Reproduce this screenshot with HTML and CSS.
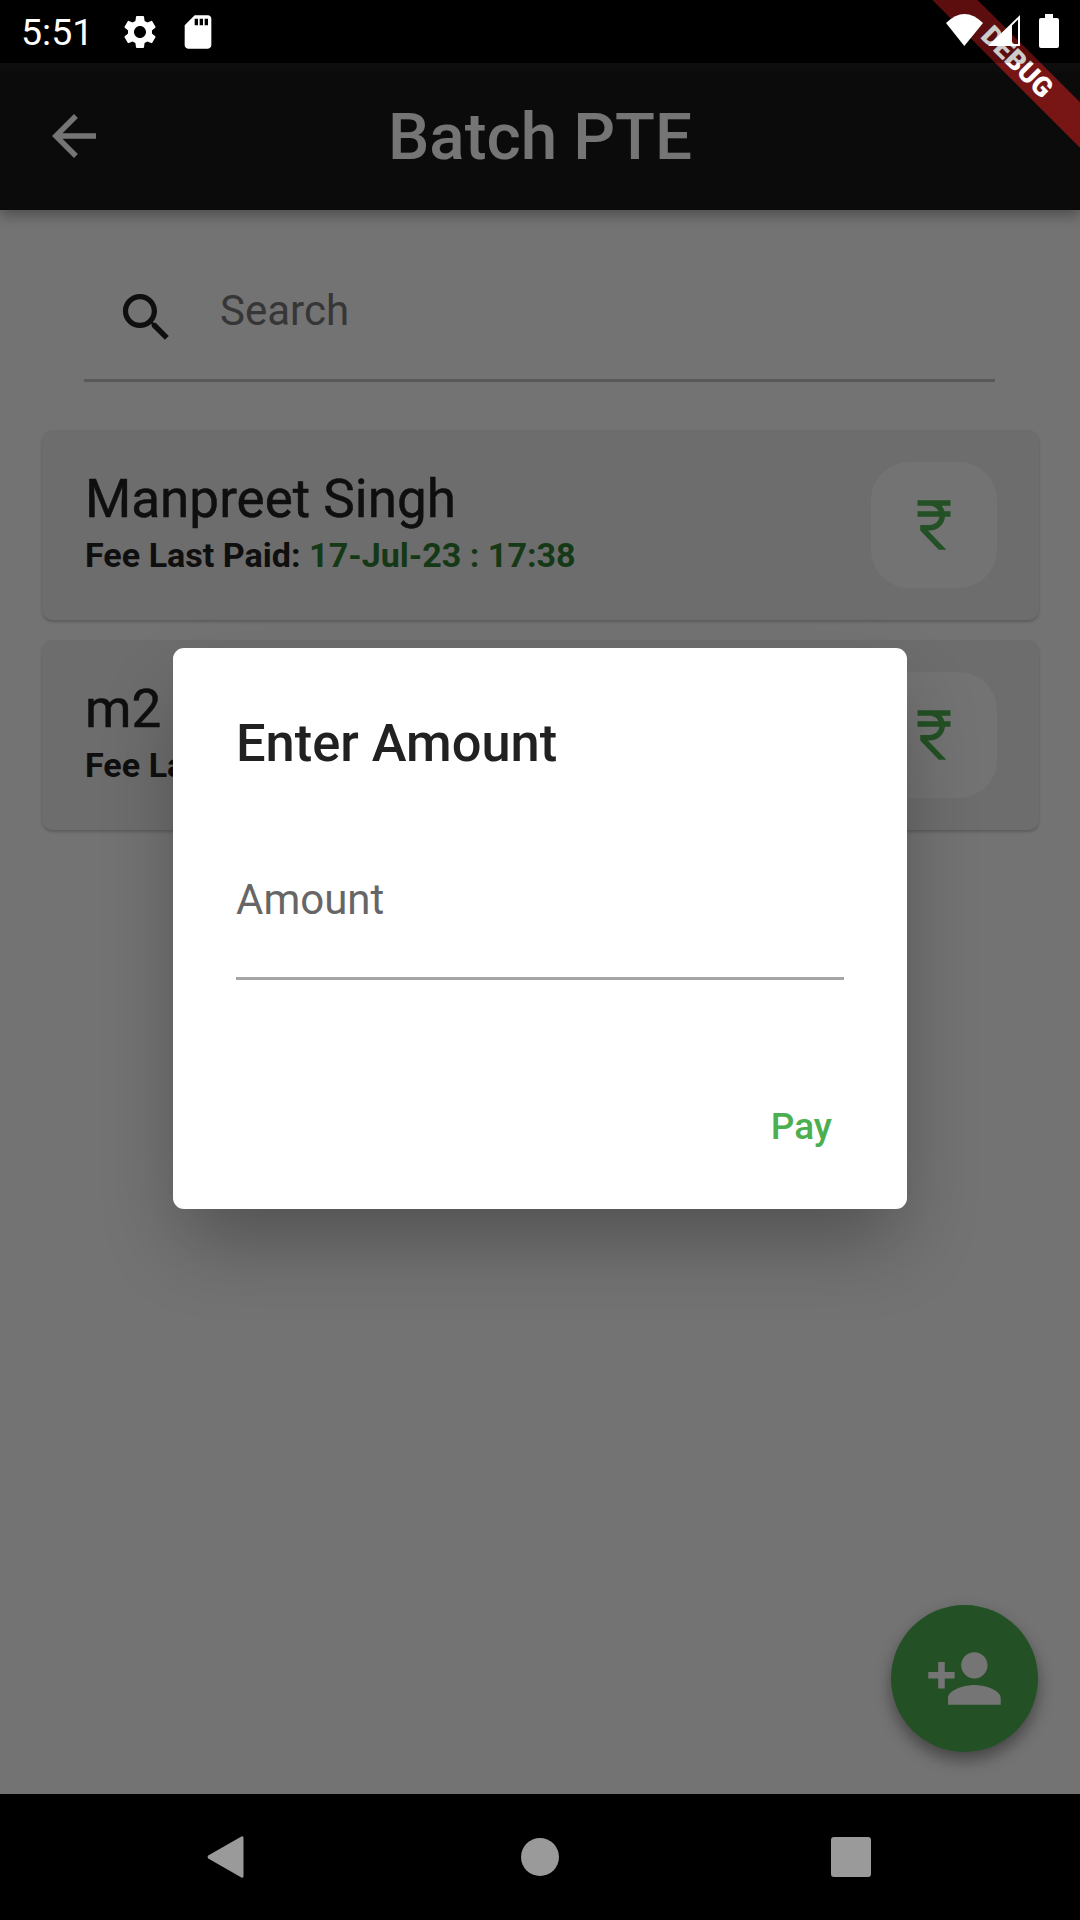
FILE: index.html
```html
<!DOCTYPE html>
<html lang="en">
<head>
<meta charset="utf-8">
<title>Batch PTE</title>
<link rel="stylesheet" href="styles.css">
</head>
<body>
<div class="screen">
  <div class="statusbar">
    <div class="status-left">
      <span class="clock">5:51</span>
      <svg class="ic-gear" viewBox="0 0 24 24"><path d="M19.14 12.94c.04-.3.06-.61.06-.94 0-.32-.02-.64-.07-.94l2.03-1.58c.18-.14.23-.41.12-.61l-1.92-3.32c-.12-.22-.37-.29-.59-.22l-2.39.96c-.5-.38-1.03-.7-1.62-.94l-.36-2.54c-.04-.24-.24-.41-.48-.41h-3.84c-.24 0-.43.17-.47.41l-.36 2.54c-.59.24-1.13.57-1.62.94l-2.39-.96c-.22-.08-.47 0-.59.22L2.74 8.87c-.12.21-.08.47.12.61l2.03 1.58c-.05.3-.09.63-.09.94s.02.64.07.94l-2.03 1.58c-.18.14-.23.41-.12.61l1.92 3.32c.12.22.37.29.59.22l2.39-.96c.5.38 1.03.7 1.62.94l.36 2.54c.05.24.24.41.48.41h3.84c.24 0 .44-.17.47-.41l.36-2.54c.59-.24 1.13-.56 1.62-.94l2.39.96c.22.08.47 0 .59-.22l1.92-3.32c.12-.22.07-.47-.12-.61l-2.01-1.58zM12 15.6c-1.98 0-3.6-1.62-3.6-3.6s1.62-3.6 3.6-3.6 3.6 1.62 3.6 3.6-1.62 3.6-3.6 3.6z"/></svg>
      <svg class="ic-sd" viewBox="0 0 24 24"><path d="M18 2h-8L4.02 8 4 20c0 1.1.9 2 2 2h12c1.1 0 2-.9 2-2V4c0-1.1-.9-2-2-2zm-6 6h-2V4h2v4zm3 0h-2V4h2v4zm3 0h-2V4h2v4z"/></svg>
    </div>
    <div class="status-right">
      <svg class="ic-wifi" viewBox="0 0 40 34"><path d="M1 9Q19.5-9 38 9L19.3 32Z"/></svg>
      <svg class="ic-signal" viewBox="0 0 34 34"><path fill-rule="evenodd" d="M33 1V32H1ZM25 30H31V5.5L25 11.5Z"/></svg>
      <svg class="ic-battery" viewBox="0 0 20 34"><path d="M6 0H14V4H18Q20 4 20 6V32Q20 34 18 34H2Q0 34 0 32V6Q0 4 2 4H6Z"/></svg>
    </div>
  </div>

  <header class="appbar">
    <svg class="ic-back" viewBox="0 0 24 24"><path d="M20 11H7.83l5.59-5.59L12 4l-8 8 8 8 1.41-1.41L7.83 13H20v-2z"/></svg>
    <h1 class="appbar-title">Batch PTE</h1>
  </header>

  <main class="body">
    <div class="search">
      <svg class="ic-search" viewBox="0 0 24 24"><path d="M15.5 14h-.79l-.28-.27C15.41 12.59 16 11.11 16 9.5 16 5.91 13.09 3 9.5 3S3 5.91 3 9.5 5.91 16 9.5 16c1.61 0 3.09-.59 4.23-1.57l.27.28v.79l5 4.99L20.49 19l-4.99-5zm-6 0C7.01 14 5 11.99 5 9.5S7.01 5 9.5 5 14 7.01 14 9.5 11.99 14 9.5 14z"/></svg>
      <span class="search-hint">Search</span>
    </div>
    <div class="list">
      <article class="card">
        <div class="card-text">
          <div class="name">Manpreet Singh</div>
          <div class="fee">Fee Last Paid: <span class="fee-date">17-Jul-23 : 17:38</span></div>
        </div>
        <div class="pay-btn"><svg class="ic-rupee" viewBox="0 0 24 24"><path d="M13.66 7C13.1 5.82 11.9 5 10.5 5H6V3h12v2h-3.26c.48.58.84 1.26 1.05 2H18v2h-2.02c-.25 2.8-2.61 5-5.48 5h-.73l6.73 7h-2.77L7 14v-2h3.5c1.76 0 3.22-1.3 3.46-3H6V7h7.66z"/></svg></div>
      </article>
      <article class="card">
        <div class="card-text">
          <div class="name">m2</div>
          <div class="fee">Fee Last Paid:</div>
        </div>
        <div class="pay-btn"><svg class="ic-rupee" viewBox="0 0 24 24"><path d="M13.66 7C13.1 5.82 11.9 5 10.5 5H6V3h12v2h-3.26c.48.58.84 1.26 1.05 2H18v2h-2.02c-.25 2.8-2.61 5-5.48 5h-.73l6.73 7h-2.77L7 14v-2h3.5c1.76 0 3.22-1.3 3.46-3H6V7h7.66z"/></svg></div>
      </article>
    </div>
    <div class="fab"><svg class="ic-person" viewBox="0 0 24 24"><path d="M15 12c2.21 0 4-1.79 4-4s-1.79-4-4-4-4 1.79-4 4 1.79 4 4 4zm-9-2V7H4v3H1v2h3v3h2v-3h3v-2H6zm9 4c-2.67 0-8 1.34-8 4v2h16v-2c0-2.66-5.33-4-8-4z"/></svg></div>
  </main>

  <nav class="navbar">
    <svg class="ic-nav-back" viewBox="0 0 37 42"><path d="M34 .8Q36.500-.8 36.500 2V40Q36.500 42.800 34 41.200L1.200 22.500Q0 21 1.200 19.500Z"/></svg>
    <span class="nav-home"></span>
    <span class="nav-recent"></span>
  </nav>

  <div class="scrim">
    <section class="dialog">
      <h2 class="dialog-title">Enter Amount</h2>
      <div class="field"><span class="field-hint">Amount</span></div>
      <div class="dialog-actions"><span class="pay-action">Pay</span></div>
    </section>
  </div>

  <div class="ribbon">DEBUG</div>
</div>
</body>
</html>
```

FILE: styles.css
```css
* { box-sizing: border-box; margin: 0; padding: 0; }
html, body { width: 1080px; height: 1920px; background: #000; overflow: hidden; }
body { font-family: Roboto, "Liberation Sans", sans-serif; }
svg { display: block; flex: none; }

.screen { position: relative; width: 1080px; height: 1920px; display: flex; flex-direction: column; overflow: hidden; background: #000; }

/* status bar */
.statusbar { position: relative; z-index: 3; flex: none; height: 63px; display: flex; justify-content: space-between; align-items: flex-start; background: rgba(0, 0, 0, .2); }
.status-left { display: flex; align-items: center; height: 63px; padding-left: 21px; }
.clock { color: #fff; font-size: 37.5px; width: 99px; }
.ic-gear, .ic-sd { width: 40px; height: 40px; fill: #fff; }
.ic-sd { margin-left: 18px; }
.status-right { display: flex; align-items: flex-start; padding: 14px 21px 0 0; }
.ic-wifi { width: 40px; height: 34px; fill: #fff; }
.ic-signal { width: 34px; height: 34px; margin-left: 2px; fill: #fff; }
.ic-battery { width: 20px; height: 34px; margin-left: 18px; fill: #fff; }

/* app bar */
.appbar { position: relative; flex: none; height: 147px; display: flex; align-items: center; justify-content: center; background: linear-gradient(#212121, #1a1a1a 10px); box-shadow: 0 6px 12px rgba(0, 0, 0, .3); z-index: 1; }
.ic-back { position: absolute; left: 41px; top: 40px; width: 66px; height: 66px; fill: #fff; }
.appbar-title { color: #fff; font-size: 65.5px; font-weight: 500; }

/* body */
.body { position: relative; flex: 1; background: #fafafa; padding: 0 41px 0 42px; }
.search { display: flex; align-items: flex-start; height: 172px; margin: 0 44px 0 42px; border-bottom: 3px solid #c0c0c0; }
.ic-search { width: 63px; height: 63px; margin: 76px 0 0 31px; fill: #212121; }
.search-hint { margin: 76px 0 0 42px; font-size: 42px; line-height: 50px; color: #777; }

.list { display: flex; flex-direction: column; gap: 20px; margin-top: 48px; }
.card { height: 190px; display: flex; align-items: center; justify-content: space-between; padding: 0 42px 0 43px; background: #eeeeee; border-radius: 11px; box-shadow: 0 2px 3px rgba(0, 0, 0, .2); }
.card-text { padding-bottom: 5px; }
.name { font-size: 53px; line-height: 58px; color: #212121; -webkit-text-stroke: .5px #212121; }
.fee { margin-top: 8px; font-size: 34.1px; line-height: 39px; font-weight: 700; color: #212121; }
.fee-date { color: #2e7d32; }
.pay-btn { width: 126px; height: 126px; display: flex; align-items: center; justify-content: center; background: #fafafa; border-radius: 38px; }
.ic-rupee { width: 66px; height: 66px; fill: #4caf50; }

.fab { position: absolute; right: 42px; bottom: 42px; width: 147px; height: 147px; border-radius: 50%; display: flex; align-items: center; justify-content: center; background: #4caf50; box-shadow: 0 8px 16px rgba(0, 0, 0, .4); }
.ic-person { width: 79px; height: 79px; fill: #fff; }

/* navigation bar */
.navbar { position: relative; z-index: 3; flex: none; height: 126px; background: #000; display: flex; align-items: center; padding-left: 207px; }
.ic-nav-back { width: 37px; height: 42px; fill: #9a9a9a; }
.nav-home { width: 38px; height: 38px; margin-left: 277px; background: #9a9a9a; border-radius: 50%; }
.nav-recent { width: 40px; height: 40px; margin-left: 272px; background: #9a9a9a; border-radius: 3px; }

/* modal */
.scrim { position: absolute; z-index: 1; left: 0; right: 0; top: 63px; bottom: 126px; display: flex; align-items: center; justify-content: center; background: rgba(0, 0, 0, .54); }
.dialog { width: 734px; height: 561px; padding: 63px 63px 0; background: #fff; border-radius: 11px; box-shadow: 0 40px 80px -10px rgba(0, 0, 0, .3); display: flex; flex-direction: column; }
.dialog-title { font-size: 52.4px; font-weight: 500; line-height: 65px; color: #212121; }
.field { height: 166px; margin-top: 38px; padding-top: 60px; border-bottom: 3px solid #a5a5a5; display: flex; align-items: flex-start; }
.field-hint { font-size: 42px; line-height: 52px; color: #666; }
.dialog-actions { display: flex; justify-content: flex-end; padding: 0 12px 0 0; margin-top: 124px; }
.pay-action { font-size: 37px; font-weight: 500; line-height: 46px; color: #4caf50; }

/* debug ribbon */
.ribbon { position: absolute; z-index: 2; left: 867px; top: 46px; width: 300px; height: 32px; transform: rotate(45deg); background: rgba(183, 28, 28, .63); color: #fff; font-size: 27.5px; font-weight: 900; line-height: 32px; text-align: center; }
```
